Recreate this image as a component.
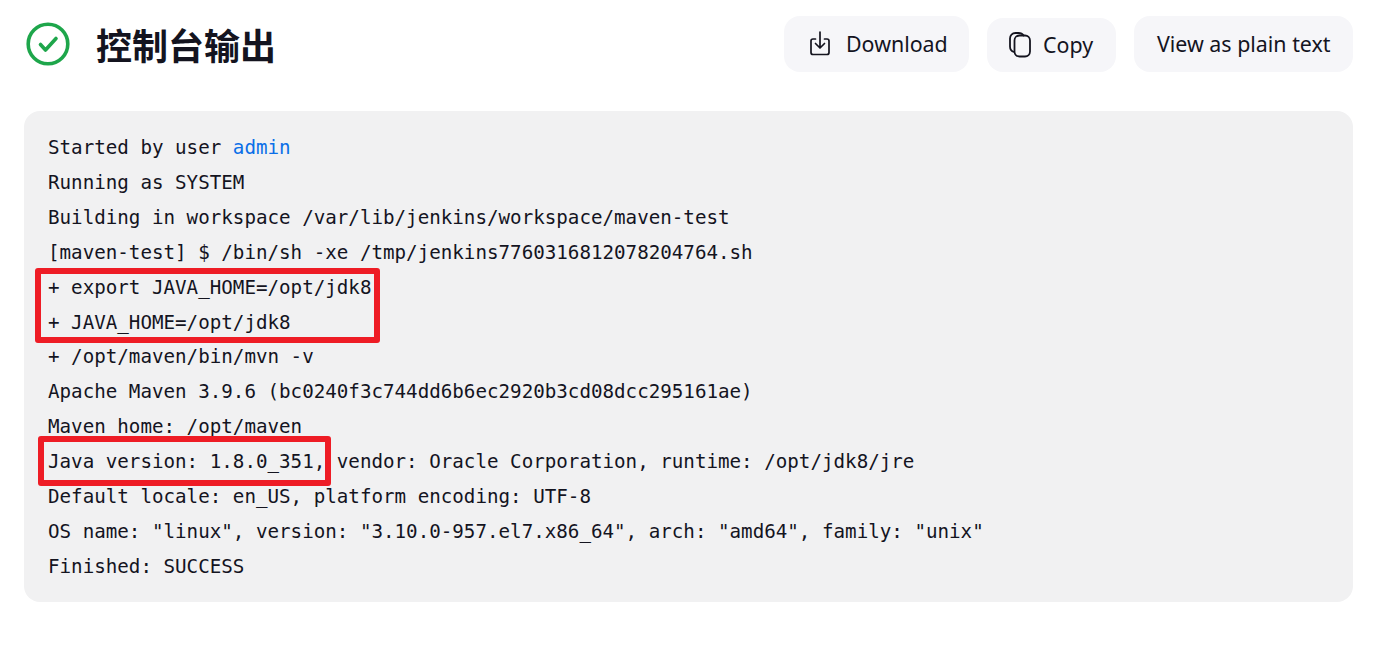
<script lang="ts">
	const lines = [
		'Running as SYSTEM',
		'Building in workspace /var/lib/jenkins/workspace/maven-test',
		'[maven-test] $ /bin/sh -xe /tmp/jenkins7760316812078204764.sh',
		'+ export JAVA_HOME=/opt/jdk8',
		'+ JAVA_HOME=/opt/jdk8',
		'+ /opt/maven/bin/mvn -v',
		'Apache Maven 3.9.6 (bc0240f3c744dd6b6ec2920b3cd08dcc295161ae)',
		'Maven home: /opt/maven',
		'Java version: 1.8.0_351, vendor: Oracle Corporation, runtime: /opt/jdk8/jre',
		'Default locale: en_US, platform encoding: UTF-8',
		'OS name: "linux", version: "3.10.0-957.el7.x86_64", arch: "amd64", family: "unix"',
		'Finished: SUCCESS'
	];
</script>

<div class="page">
	<header class="head">
		<svg class="status" width="44" height="44" viewBox="0 0 44 44" fill="none">
			<circle cx="22" cy="22" r="19.8" stroke="#1ea64b" stroke-width="3.6" />
			<path d="M14.5 22.5L19.5 28L30 16.5" stroke="#1ea64b" stroke-width="3.6" stroke-linecap="round" stroke-linejoin="round" />
		</svg>
		<h1>控制台输出</h1>
		<div class="actions">
			<button class="download">
				<svg width="20" height="25" viewBox="0 0 20 25" fill="none" stroke="currentColor" stroke-width="1.7" stroke-linecap="round" stroke-linejoin="round">
					<path d="M5.5 8H3C1.9 8 1 8.9 1 10V21.5C1 22.6 1.9 23.5 3 23.5H17C18.1 23.5 19 22.6 19 21.5V10C19 8.9 18.1 8 17 8H14.5" />
					<path d="M10 1V16.5M5.5 12.5L10 17L14.5 12.5" />
				</svg>
				Download
			</button>
			<button class="copy">
				<svg width="22" height="26" viewBox="0 0 22 26" fill="none" stroke="currentColor" stroke-width="1.8" stroke-linecap="round" stroke-linejoin="round">
					<rect x="5.5" y="3.5" width="15.5" height="21" rx="5" />
					<path d="M5 20C2.5 19.2 1 17.2 1 14.5V6.5C1 3.2 3.2 1 6.5 1H9.5C11.8 1 13.6 1.9 14.6 3.5" />
				</svg>
				Copy
			</button>
			<button class="plain">View as plain text</button>
		</div>
	</header>

	<div class="console">
		<pre>Started by user <a href="#admin">admin</a>
{lines.join('\n')}
</pre>
		<span class="mark first"></span>
		<span class="mark second"></span>
	</div>
</div>

<style>
	:global(body) {
		background: #fff;
	}
	.page {
		padding: 16px 27px 0 24px;
		font-family: "Inter", "Noto Sans", sans-serif;
		color: #14141f;
	}
	.head {
		display: flex;
		align-items: center;
		height: 56px;
		margin-bottom: 39px;
	}
	.status {
		margin: 0 26px 0 2px;
	}
	h1 {
		margin: 0;
		font-family: "Noto Sans CJK SC", sans-serif;
		font-size: 36px;
		font-weight: 700;
		line-height: 56px;
		color: #14141f;
	}
	.actions {
		display: flex;
		align-items: center;
		gap: 18px;
		margin-left: auto;
	}
	button {
		display: flex;
		align-items: center;
		height: 56px;
		box-sizing: border-box;
		border: none;
		border-radius: 16px;
		background: #f6f6f9;
		color: #14141f;
		font-family: "Noto Sans", sans-serif;
		font-size: 21.4px;
		cursor: pointer;
	}
	.download {
		width: 185px;
		gap: 16px;
		padding: 0 0 2px 26px;
	}
	.copy {
		width: 129px;
		height: 54px;
		gap: 12px;
		padding: 0 0 0 22px;
		margin-top: 1px;
	}
	.plain {
		width: 219px;
		padding: 0 0 2px 23px;
	}
	.console {
		position: relative;
		height: 491px;
		box-sizing: border-box;
		padding: 20px 24px;
		border-radius: 16px;
		background: #f1f1f2;
	}
	pre {
		margin: 0;
		font-family: "DejaVu Sans Mono", monospace;
		font-size: 19.2px;
		line-height: 34.9px;
		color: #14141f;
	}
	a {
		color: #0b6fe8;
		text-decoration: none;
	}
	.mark {
		position: absolute;
		box-sizing: border-box;
		border: 6px solid #ee1c25;
		border-radius: 3px;
	}
	.first {
		left: 11px;
		top: 157px;
		width: 345px;
		height: 75px;
	}
	.second {
		left: 14px;
		top: 325px;
		width: 293px;
		height: 50px;
	}
</style>
